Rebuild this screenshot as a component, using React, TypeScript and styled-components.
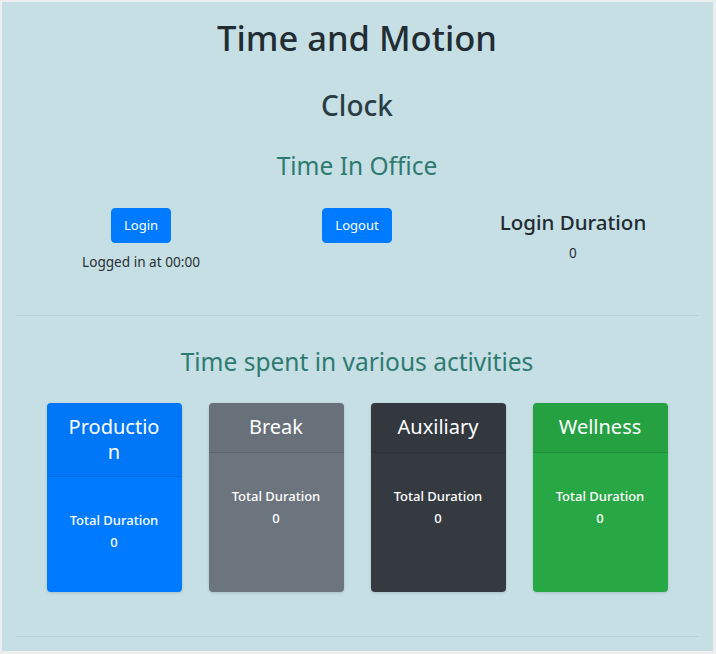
import React from "react";
import styled, { createGlobalStyle } from "styled-components";

const Global = createGlobalStyle`
  html, body { margin: 0; padding: 0; }
  body {
    background: #eceeef;
    font-family: "Noto Sans", "Open Sans", sans-serif;
    color: #212529;
  }
`;

const Frame = styled.div`
  margin: 2px 3px 0 2px;
  height: 649px;
  background: #c5dfe5;
  padding: 0 15px 0 14px;
  box-sizing: border-box;
  overflow: hidden;
`;

const Title = styled.h1`
  margin: 12px 0 0;
  text-align: center;
  font-size: 34.5px;
  font-weight: 500;
  line-height: 48px;
  color: #222d33;
`;

const Subtitle = styled.h2`
  margin: 24px 0 0;
  text-align: center;
  font-size: 28px;
  font-weight: 500;
  line-height: 38px;
  color: #2a3d45;
`;

const SectionTitle = styled.h3<{ $top: number }>`
  margin: ${(p) => p.$top}px 0 0;
  text-align: center;
  font-size: 24.5px;
  font-weight: 400;
  line-height: 31px;
  color: #2e7a70;
`;

const ClockRow = styled.div`
  display: grid;
  grid-template-columns: repeat(3, 1fr);
  padding: 0 17px;
  margin-top: 27px;
  height: 107px;
`;

const Col = styled.div`
  display: flex;
  flex-direction: column;
  align-items: center;
`;

const Button = styled.button`
  font-family: inherit;
  font-size: 13px;
  line-height: 21px;
  padding: 6px 12px;
  border: 1px solid #007bff;
  border-radius: 4px;
  background: #007bff;
  color: #fff;
  cursor: pointer;
`;

const Small = styled.div<{ $top: number }>`
  margin-top: ${(p) => p.$top}px;
  font-size: 13.6px;
  line-height: 21px;
  color: #2a2f33;
`;

const DurationTitle = styled.h4`
  margin: 1px 0 0;
  font-size: 20.5px;
  font-weight: 500;
  line-height: 26px;
  color: #222a30;
`;

const Divider = styled.hr<{ $top?: number }>`
  margin: ${(p) => p.$top ?? 0}px 0 0;
  border: 0;
  border-top: 1px solid rgba(0, 0, 0, 0.08);
`;

const Cards = styled.div`
  display: grid;
  grid-template-columns: repeat(4, 1fr);
  padding: 0 17px;
  margin-top: 26px;
`;

const CardCell = styled.div`
  display: flex;
  padding: 0 13.5px;
`;

const Card = styled.div<{ $bg: string }>`
  flex: 1;
  height: 189px;
  display: flex;
  flex-direction: column;
  background: ${(p) => p.$bg};
  border-radius: 4px;
  color: #fff;
  box-shadow: 0 1px 3px rgba(0, 0, 0, 0.15);
  overflow: hidden;
`;

const CardHeader = styled.div`
  padding: 12px 20px;
  font-size: 20px;
  line-height: 24.5px;
  text-align: center;
  word-break: break-all;
  background: rgba(0, 0, 0, 0.03);
  border-bottom: 1px solid rgba(0, 0, 0, 0.1);
`;

const CardBody = styled.div`
  padding-top: 32px;
  text-align: center;
  font-size: 13px;
  font-weight: 500;
  line-height: 22px;
`;

const cards = [
  { name: "Production", bg: "#007bff" },
  { name: "Break", bg: "#6c757d" },
  { name: "Auxiliary", bg: "#343a40" },
  { name: "Wellness", bg: "#28a745" },
];

export default function App() {
  return (
    <>
      <Global />
      <Frame>
        <Title>Time and Motion</Title>
        <Subtitle>Clock</Subtitle>
        <SectionTitle $top={26}>Time In Office</SectionTitle>
        <ClockRow>
          <Col>
            <Button>Login</Button>
            <Small $top={8}>Logged in at 00:00</Small>
          </Col>
          <Col>
            <Button>Logout</Button>
          </Col>
          <Col>
            <DurationTitle>Login Duration</DurationTitle>
            <Small $top={7}>0</Small>
          </Col>
        </ClockRow>
        <Divider />
        <SectionTitle $top={30}>Time spent in various activities</SectionTitle>
        <Cards>
          {cards.map((c) => (
            <CardCell key={c.name}>
              <Card $bg={c.bg}>
                <CardHeader>{c.name}</CardHeader>
                <CardBody>
                  <div>Total Duration</div>
                  <div>0</div>
                </CardBody>
              </Card>
            </CardCell>
          ))}
        </Cards>
        <Divider $top={44} />
      </Frame>
    </>
  );
}
